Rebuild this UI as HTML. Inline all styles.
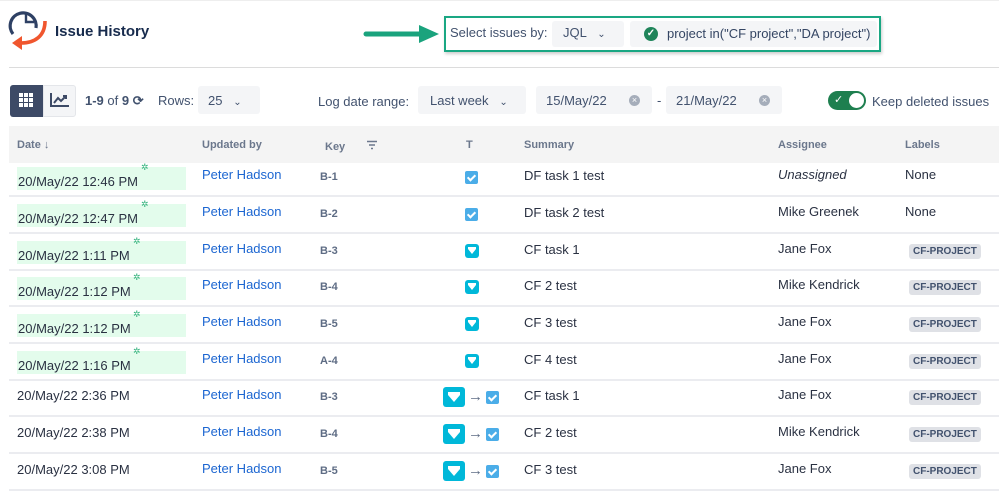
<!DOCTYPE html>
<html><head><meta charset="utf-8"><style>
*{margin:0;padding:0;box-sizing:border-box}
body{width:999px;height:482px;overflow:hidden;background:#fff;font-family:"Liberation Sans",Arial,sans-serif;color:#2a3142;position:relative;font-size:13px}
.a{position:absolute;white-space:nowrap}
.dd{position:absolute;background:#f4f5f7;border-radius:3px}
.hdr{position:absolute;left:9px;top:126px;width:990px;height:37px;background:#f4f4f4}
.hdr span{position:absolute;top:13px;font-size:11px;font-weight:bold;color:#6b778c}
.row{position:absolute;left:9px;width:990px;height:37px;border-bottom:2px solid #ebecf0}
.row span{position:absolute;white-space:nowrap}
.dt{left:8px;top:7px;height:23px;width:169px}
.dt.g{background:#e3fcec}
.dt i{position:absolute;top:-5px;font-style:normal;color:#36b37e;font-size:9px}
.dt b{font-weight:normal;position:absolute;left:1px;top:7px}
.pn{left:193px;top:7px;color:#1c66d1}
.ky{left:311px;top:11px;font-size:11px;font-weight:bold;color:#5e6c84}
.sm{left:515px;top:8px}
.as{left:769px;top:7px}
.lb{left:896px;top:7px}
.d2{left:8px;top:8px}
.tag{position:absolute;left:900px;top:10px;background:#dfe1e6;color:#42526e;font-size:10px;font-weight:bold;padding:2px 4px;border-radius:3px}
.ck{position:absolute;width:13px;height:13px;background:#4bade8;border-radius:2px}
.ck:after{content:"";position:absolute;left:4px;top:2px;width:3px;height:6px;border:solid #fff;border-width:0 2px 2px 0;transform:rotate(45deg)}
.st{position:absolute;width:14px;height:14px;background:#00b8d9;border-radius:3px}
.st:after{content:"";position:absolute;left:3px;top:5px;border-left:4px solid transparent;border-right:4px solid transparent;border-top:5px solid #fff}
.st:before{content:"";position:absolute;left:3px;top:3px;width:8px;height:2px;background:#fff}
.st.big{width:22px;height:20px}
.st.big:after{left:5px;top:8px;border-left:6px solid transparent;border-right:6px solid transparent;border-top:7px solid #fff}
.st.big:before{left:5px;top:5px;width:12px;height:3px}
.ar{left:459px;top:8px;color:#5e6c84;font-size:15px}
</style></head><body>
<div class="a" style="left:0;top:0;width:999px;height:1px;background:#eee"></div>
<svg class="a" style="left:4px;top:3px" width="46" height="50" viewBox="0 0 46 50">
<path d="M9 31 A13 13 0 1 1 32 25" fill="none" stroke="#2e4064" stroke-width="3.2"/>
<path d="M22 9 V19 H30" fill="none" stroke="#2e4064" stroke-width="2.4"/>
<path d="M41 18 C41 33 31 40 17 40" fill="none" stroke="#f0562e" stroke-width="3.6"/>
<path d="M8 40 L18 33 L18 47 Z" fill="#f0562e"/>
</svg>
<div class="a" style="left:55px;top:23px;font-size:15px;font-weight:bold;color:#172b4d">Issue History</div>
<svg class="a" style="left:363px;top:24px" width="80" height="20"><path d="M3 10 H58" stroke="#1aa37d" stroke-width="5" stroke-linecap="round"/><path d="M56 1 L76 10 L56 19 Z" fill="#1aa37d"/></svg>
<div class="a" style="left:444px;top:16px;width:437px;height:36px;border:2px solid #1aa783;box-shadow:1px 2px 3px rgba(0,0,0,.2)"></div>
<div class="a" style="left:450px;top:25px;color:#42526e">Select issues by:</div>
<div class="dd" style="left:552px;top:21px;width:72px;height:26px"></div>
<div class="a" style="left:563px;top:25px;color:#42526e">JQL &nbsp;&nbsp;<span style="font-size:10px">&#8964;</span></div>
<div class="dd" style="left:630px;top:21px;width:247px;height:26px"></div>
<div class="a" style="left:644px;top:27px;width:14px;height:14px;border-radius:50%;background:#1f845a;color:#fff;font-size:10px;text-align:center;line-height:14px;font-weight:bold">✓</div>
<div class="a" style="left:667px;top:26px;color:#344563;font-size:13px">project in("CF project","DA project")</div>
<div class="a" style="left:9px;top:67px;width:990px;height:1px;background:#dcdcdc"></div>
<div class="a" style="left:10px;top:85px;width:33px;height:32px;background:#3d4a66;border-radius:3px 0 0 3px"></div>
<svg class="a" style="left:19px;top:93px" width="15" height="15"><g fill="#fff"><rect x="0" y="0" width="4" height="4"/><rect x="5" y="0" width="4" height="4"/><rect x="10" y="0" width="4" height="4"/><rect x="0" y="5" width="4" height="4"/><rect x="5" y="5" width="4" height="4"/><rect x="10" y="5" width="4" height="4"/><rect x="0" y="10" width="4" height="4"/><rect x="5" y="10" width="4" height="4"/><rect x="10" y="10" width="4" height="4"/></g></svg>
<div class="a" style="left:43px;top:85px;width:33px;height:32px;background:#f4f5f7;border:1px solid #e4e6ea;border-radius:0 3px 3px 0"></div>
<svg class="a" style="left:50px;top:92px" width="20" height="16"><path d="M1 1 V14 H19" fill="none" stroke="#3d4a66" stroke-width="2"/><path d="M4 11 L8 6 L11 9 L16 4 M13 4 H16 V7" fill="none" stroke="#3d4a66" stroke-width="2"/></svg>
<div class="a" style="left:85px;top:93px;color:#42526e"><b>1-9</b> of <b>9</b> <b>⟳</b></div>
<div class="a" style="left:158px;top:93px;color:#42526e">Rows:</div>
<div class="dd" style="left:198px;top:86px;width:62px;height:28px"></div>
<div class="a" style="left:208px;top:93px;color:#42526e">25 &nbsp;&nbsp;<span style="font-size:10px">&#8964;</span></div>
<div class="a" style="left:318px;top:94px;color:#42526e">Log date range:</div>
<div class="dd" style="left:418px;top:86px;width:108px;height:28px"></div>
<div class="a" style="left:430px;top:93px;color:#42526e">Last week &nbsp;&nbsp;<span style="font-size:10px">&#8964;</span></div>
<div class="dd" style="left:536px;top:86px;width:116px;height:28px"></div>
<div class="a" style="left:546px;top:93px;color:#42526e">15/May/22</div>
<div class="a" style="left:629px;top:95px;width:11px;height:11px;border-radius:50%;background:#a5adba;color:#fff;font-size:9px;line-height:11px;text-align:center">×</div>
<div class="a" style="left:657px;top:93px;color:#42526e">-</div>
<div class="dd" style="left:666px;top:86px;width:116px;height:28px"></div>
<div class="a" style="left:676px;top:93px;color:#42526e">21/May/22</div>
<div class="a" style="left:759px;top:95px;width:11px;height:11px;border-radius:50%;background:#a5adba;color:#fff;font-size:9px;line-height:11px;text-align:center">×</div>
<div class="a" style="left:828px;top:91px;width:38px;height:19px;border-radius:10px;background:#1e7f4f"></div>
<div class="a" style="left:834px;top:93px;color:#fff;font-size:11px;line-height:14px">✓</div>
<div class="a" style="left:849px;top:93px;width:15px;height:15px;border-radius:50%;background:#fff"></div>
<div class="a" style="left:872px;top:94px;color:#42526e">Keep deleted issues</div>
<div class="hdr"><span style="left:8px">Date ↓</span><span style="left:193px">Updated by</span><span style="left:316px;top:15px">Key</span><span style="left:457px">T</span><span style="left:515px">Summary</span><span style="left:769px">Assignee</span><span style="left:896px">Labels</span></div>
<svg class="a" style="left:366px;top:140px" width="12" height="10"><path d="M1 1.5 H11 M3 5 H9 M5 8.5 H7" stroke="#6b778c" stroke-width="1.5"/></svg>

<div class="row" style="top:160px"><div class="a dt g"><b>20/May/22 12:46 PM</b><i style="left:124px">✲</i></div><span class="pn">Peter Hadson</span><span class="ky">B-1</span><div class="ck" style="left:456px;top:11px"></div><span class="sm">DF task 1 test</span><span class="as" style="font-style:italic">Unassigned</span><span class="lb">None</span></div>
<div class="row" style="top:197px"><div class="a dt g"><b>20/May/22 12:47 PM</b><i style="left:124px">✲</i></div><span class="pn">Peter Hadson</span><span class="ky">B-2</span><div class="ck" style="left:456px;top:11px"></div><span class="sm">DF task 2 test</span><span class="as">Mike Greenek</span><span class="lb">None</span></div>
<div class="row" style="top:234px"><div class="a dt g"><b>20/May/22 1:11 PM</b><i style="left:116px">✲</i></div><span class="pn">Peter Hadson</span><span class="ky">B-3</span><div class="st" style="left:456px;top:10px"></div><span class="sm">CF task 1</span><span class="as">Jane Fox</span><span class="tag">CF-PROJECT</span></div>
<div class="row" style="top:270px"><div class="a dt g"><b>20/May/22 1:12 PM</b><i style="left:116px">✲</i></div><span class="pn">Peter Hadson</span><span class="ky">B-4</span><div class="st" style="left:456px;top:10px"></div><span class="sm">CF 2 test</span><span class="as">Mike Kendrick</span><span class="tag">CF-PROJECT</span></div>
<div class="row" style="top:307px"><div class="a dt g"><b>20/May/22 1:12 PM</b><i style="left:116px">✲</i></div><span class="pn">Peter Hadson</span><span class="ky">B-5</span><div class="st" style="left:456px;top:10px"></div><span class="sm">CF 3 test</span><span class="as">Jane Fox</span><span class="tag">CF-PROJECT</span></div>
<div class="row" style="top:344px"><div class="a dt g"><b>20/May/22 1:16 PM</b><i style="left:116px">✲</i></div><span class="pn">Peter Hadson</span><span class="ky">A-4</span><div class="st" style="left:456px;top:10px"></div><span class="sm">CF 4 test</span><span class="as">Jane Fox</span><span class="tag">CF-PROJECT</span></div>
<div class="row" style="top:380px"><span class="d2">20/May/22 2:36 PM</span><span class="pn">Peter Hadson</span><span class="ky">B-3</span><div class="st big" style="left:434px;top:7px"></div><span class="ar">→</span><div class="ck" style="left:477px;top:11px"></div><span class="sm">CF task 1</span><span class="as">Jane Fox</span><span class="tag">CF-PROJECT</span></div>
<div class="row" style="top:417px"><span class="d2">20/May/22 2:38 PM</span><span class="pn">Peter Hadson</span><span class="ky">B-4</span><div class="st big" style="left:434px;top:7px"></div><span class="ar">→</span><div class="ck" style="left:477px;top:11px"></div><span class="sm">CF 2 test</span><span class="as">Mike Kendrick</span><span class="tag">CF-PROJECT</span></div>
<div class="row" style="top:454px"><span class="d2">20/May/22 3:08 PM</span><span class="pn">Peter Hadson</span><span class="ky">B-5</span><div class="st big" style="left:434px;top:7px"></div><span class="ar">→</span><div class="ck" style="left:477px;top:11px"></div><span class="sm">CF 3 test</span><span class="as">Jane Fox</span><span class="tag">CF-PROJECT</span></div>
</body></html>
